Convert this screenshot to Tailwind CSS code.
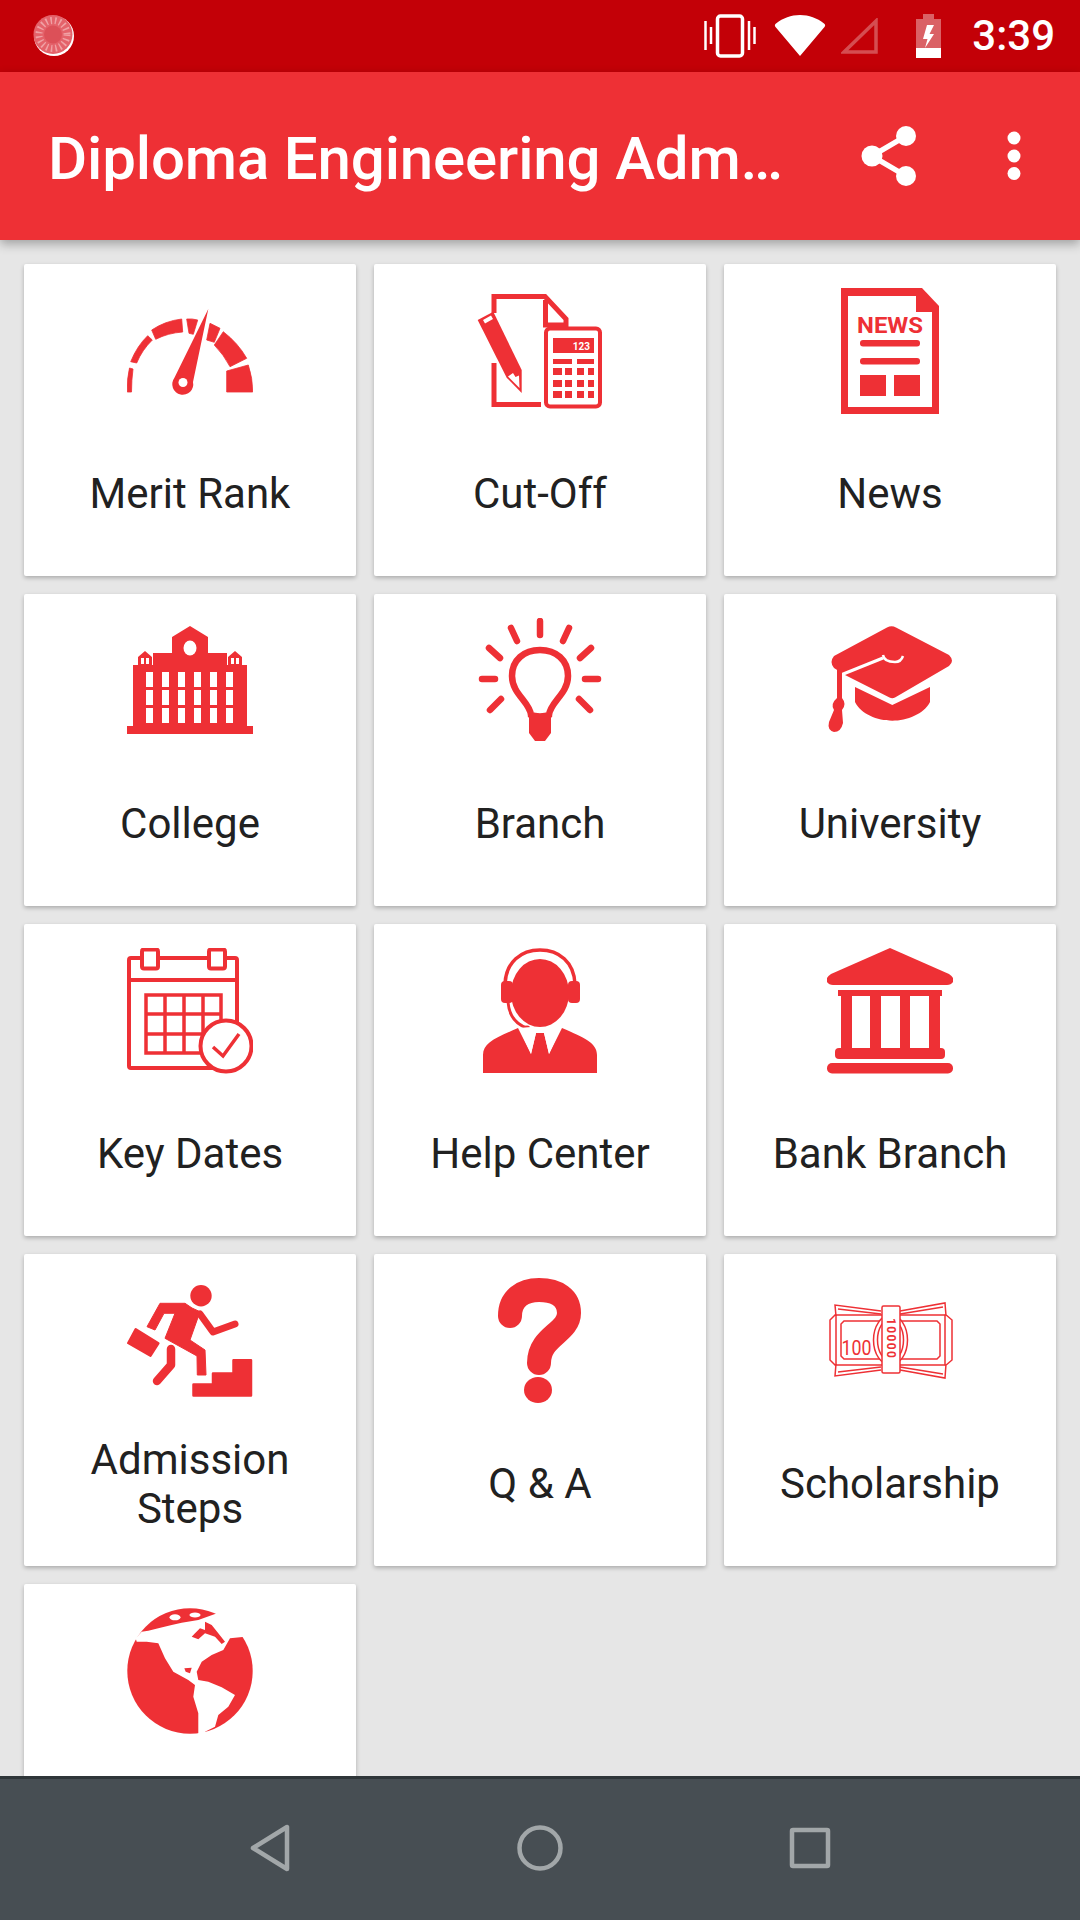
<!doctype html>
<html lang="en">
  <head>
    <meta charset="UTF-8" />
    <title>Diploma Engineering Admission</title>
    <script src="https://cdn.jsdelivr.net/npm/@tailwindcss/browser@4"></script>
  </head>
  <body class="font-['Roboto',sans-serif]">
    <div class="flex flex-col w-[1080px] h-[1920px] overflow-hidden bg-[#e6e6e6]">
      <!-- status bar -->
      <div class="h-[72px] shrink-0 bg-[#c30007] flex items-center text-white relative">
        <svg class="ml-[32px] w-[44px] h-[44px]" viewBox="0 0 44 44">
          <circle cx="22" cy="22" r="20" fill="#fff"/>
          <circle cx="21" cy="20.500" r="19.500" fill="#e4626a"/>
          <circle cx="21" cy="20.500" r="14" fill="none" stroke="#f0a0a4" stroke-width="7" stroke-dasharray="1.500 3"/>
          <circle cx="21" cy="20.500" r="9" fill="#dc5058"/>
        </svg>
        <div class="ml-auto flex items-center">
          <svg class="w-[52px] h-[44px]" viewBox="0 0 52 44" fill="none" stroke="#fff">
            <rect x="13.500" y="2" width="25" height="40" rx="3" stroke-width="3.500"/>
            <path d="M7 13V30M1.500 7V36M45 7V36M50.500 13V30" stroke-width="2.500"/>
          </svg>
          <svg class="ml-[18px] w-[52px] h-[42px]" viewBox="0 0 52 42">
            <path d="M26 41L1.500 12Q0 10 2 8.500C9 3 17 0 26 0S43 3 50 8.500Q52 10 50.500 12Z" fill="#fff"/>
          </svg>
          <svg class="ml-[15px] w-[38px] h-[36px]" viewBox="0 0 38 36" fill="none">
            <path d="M3 34L35 3V34Z" stroke="#fff" stroke-opacity=".3" stroke-width="3.500"/>
          </svg>
          <svg class="ml-[37px] w-[25px] h-[44px]" viewBox="0 0 25 44">
            <path d="M7 0H18V5H25V44H0V5H7Z" fill="#fff" fill-opacity=".38"/>
            <path d="M0 34H25V44H0Z" fill="#fff"/>
            <path d="M18 11H11L7 25H11.500L9 34L18 20H13.500Z" fill="#fff"/>
          </svg>
          <span class="ml-[31px] mr-[25px] text-[42px] font-medium leading-none">3:39</span>
        </div>
      </div>

      <!-- app bar -->
      <div class="h-[168px] shrink-0 bg-[#ee3035] flex items-center relative z-10 shadow-[0_4px_10px_rgba(0,0,0,0.3)] text-white">
        <h1 class="ml-[48px] mt-[5px] text-[60px] tracking-[-0.15px] font-medium leading-none">Diploma Engineering Adm…</h1>
        <svg class="ml-auto w-[60px] h-[64px]" viewBox="0 0 60 64" fill="#fff">
          <path d="M47 12L13 32L47 52" fill="none" stroke="#fff" stroke-width="5.500"/>
          <circle cx="47" cy="12" r="10"/>
          <circle cx="13" cy="32" r="10.500"/>
          <circle cx="47" cy="52" r="10"/>
        </svg>
        <svg class="ml-[86px] mr-[57px] w-[18px] h-[52px]" viewBox="0 0 18 52" fill="#fff">
          <circle cx="9" cy="8" r="6.500"/>
          <circle cx="9" cy="26" r="6.500"/>
          <circle cx="9" cy="43.500" r="6.500"/>
        </svg>
      </div>

      <!-- grid -->
      <main class="flex-1 min-h-0 overflow-hidden px-[24px] pt-[24px]">
        <div class="grid grid-cols-3 gap-[18px] text-[42px] leading-[49px] text-[#212121] text-center">

          <div class="h-[312px] bg-white rounded-[2px] shadow-[0_2px_4px_rgba(0,0,0,0.25)] flex flex-col items-center pt-[24px] pb-[3px]">
            <svg class="w-[126px] h-[126px] shrink-0" viewBox="0 0 126 126" fill="#ee3035">
              <g stroke="#ee3035" stroke-width="0.800" stroke-linejoin="round">
                <path d="M0.300 104Q0 90 2.500 80L6 81Q4.500 92 4.500 104Z"/>
                <path d="M3.700 73.700Q10 58 20.700 47.700L25.300 52Q15 62 9.700 75Z"/>
                <path d="M24.700 42Q38 33 54.700 31L55.700 44Q41 45 28.700 51.300Z"/>
                <path d="M59.700 31Q65 30.500 70.700 32L66.300 46.300L62 45.300Z"/>
                <path d="M83 35.300L93 40.300L87.300 54.300L79.700 52Z"/>
                <path d="M96.300 43.700Q111 55 119.700 70.300L103 78.700Q97 67 87.300 57Z"/>
                <path d="M121.300 77Q125.700 90 125.700 104H99.700V83Z"/>
              </g>
              <path d="M81.300 21L66 94A10.500 10.500 0 1 1 47.300 90Z"/>
              <circle cx="56" cy="94.500" r="4.500" fill="#fff"/>
            </svg>
            <div class="flex-1 flex items-center justify-center">Merit Rank</div>
          </div>

          <div class="h-[312px] bg-white rounded-[2px] shadow-[0_2px_4px_rgba(0,0,0,0.25)] flex flex-col items-center pt-[24px] pb-[3px]">
            <svg class="w-[126px] h-[126px] shrink-0" viewBox="0 0 126 126" fill="#ee3035">
              <path d="M17 25V8.500H68L89 31V37H68.500V12" fill="none" stroke="#ee3035" stroke-width="5"/>
              <path d="M17 75V116.500H64" fill="none" stroke="#ee3035" stroke-width="5"/>
              <path d="M0.700 32L16.300 23.700L44.700 82V105L29.700 89.700Z"/>
              <path d="M6 32L14 27.500L16 31L8 35.500ZM31 88.500L36 85L38.500 89L42 87.500L42.500 100Z" fill="#fff"/>
              <rect x="69" y="40.500" width="54" height="78" rx="4" fill="#fff" stroke="#ee3035" stroke-width="4"/>
              <rect x="76" y="50" width="41" height="15"/>
              <text x="113" y="61.500" text-anchor="end" font-size="10" font-weight="700" font-family="Roboto" fill="#fff">123</text>
              <path d="M76 71H95V76H76ZM100 71H117V76H100Z"/>
              <path d="M76 80h9v7h-9zM88 80h7v7h-7zM100 80h7v7h-7zM111 80h6v7h-6zM76 92h9v7h-9zM88 92h7v7h-7zM100 92h7v7h-7zM111 92h6v7h-6zM76 103h9v7h-9zM88 103h7v7h-7zM100 103h7v7h-7zM111 103h6v7h-6z"/>
            </svg>
            <div class="flex-1 flex items-center justify-center">Cut-Off</div>
          </div>

          <div class="h-[312px] bg-white rounded-[2px] shadow-[0_2px_4px_rgba(0,0,0,0.25)] flex flex-col items-center pt-[24px] pb-[3px]">
            <svg class="w-[126px] h-[126px] shrink-0" viewBox="0 0 126 126" fill="#ee3035">
              <path d="M14 0H95L112 18V126H14Z"/>
              <path d="M21 8H89V24H105V119H21Z" fill="#fff"/>
              <text x="63" y="45" text-anchor="middle" font-size="22" font-weight="700" font-family="Roboto" textLength="66" lengthAdjust="spacingAndGlyphs">NEWS</text>
              <rect x="33" y="52" width="60" height="6.500" rx="3"/>
              <rect x="33" y="70" width="60" height="6.500" rx="3"/>
              <rect x="33" y="87" width="26" height="21"/>
              <rect x="67" y="87" width="26" height="21"/>
            </svg>
            <div class="flex-1 flex items-center justify-center">News</div>
          </div>

          <div class="h-[312px] bg-white rounded-[2px] shadow-[0_2px_4px_rgba(0,0,0,0.25)] flex flex-col items-center pt-[24px] pb-[3px]">
            <svg class="w-[126px] h-[126px] shrink-0" viewBox="0 0 126 126" fill="#ee3035">
              <path d="M0 116V108H6V47H11V39L18 33L25 39V47H26V35H45V19L63 8L81 19V35H100V47H101V39L108 33L115 39V47H120V108H126V116Z"/>
              <ellipse cx="63" cy="30" rx="6.500" ry="7.500" fill="#fff"/>
              <path d="M19 54h7v15h-7zM35 54h7v15h-7zM51 54h7v15h-7zM67 54h7v15h-7zM83 54h7v15h-7zM99 54h7v15h-7zM19 72h7v15h-7zM35 72h7v15h-7zM51 72h7v15h-7zM67 72h7v15h-7zM83 72h7v15h-7zM99 72h7v15h-7zM19 90h7v15h-7zM35 90h7v15h-7zM51 90h7v15h-7zM67 90h7v15h-7zM83 90h7v15h-7zM99 90h7v15h-7zM14 40h3v6h-3zM19 40h3v6h-3zM104 40h3v6h-3zM109 40h3v6h-3z" fill="#fff"/>
            </svg>
            <div class="flex-1 flex items-center justify-center">College</div>
          </div>

          <div class="h-[312px] bg-white rounded-[2px] shadow-[0_2px_4px_rgba(0,0,0,0.25)] flex flex-col items-center pt-[24px] pb-[3px]">
            <svg class="w-[126px] h-[126px] shrink-0" viewBox="0 0 126 126" fill="none" stroke="#ee3035">
              <path d="M63 3V17M34 10L40 23M92 10L86 23M12 30L23 40M114 30L103 40M5 61H18M121 61H108M13 92L24 81M113 92L102 81" stroke-width="6.500" stroke-linecap="round"/>
              <path d="M54 97C53 84 35 76 35 58C35 42 47 32 63 32C79 32 91 42 91 58C91 76 73 84 72 97C68 99 58 99 54 97Z" stroke-width="6.500"/>
              <path d="M52 98H74V115L68 123H58L52 115Z" fill="#ee3035" stroke="none"/>
            </svg>
            <div class="flex-1 flex items-center justify-center">Branch</div>
          </div>

          <div class="h-[312px] bg-white rounded-[2px] shadow-[0_2px_4px_rgba(0,0,0,0.25)] flex flex-col items-center pt-[24px] pb-[3px]">
            <svg class="w-[126px] h-[126px] shrink-0" viewBox="0 0 126 126" fill="#ee3035">
              <path d="M60 9.500Q64.700 7 69 9.500L122 37Q128 43 122 48L68 79.500Q65.300 81 62.500 79.500L18 57L7 50Q2 44 7 38Z"/>
              <path d="M15 56.500L56 40" fill="none" stroke="#fff" stroke-width="3"/>
              <path d="M56 37Q57 44 68 44Q74 44 76 38" fill="none" stroke="#fff" stroke-width="2.500"/>
              <path d="M28 69L65.300 87L103 69V84C97 96 80 102.700 65.300 102.700C50 102.700 34 96 28 84Z"/>
              <path d="M10 48H15V80Q20 86 15 92L16 105Q14 114 7 114Q0 112 2 104L7 92Q3 86 10 80Z"/>
            </svg>
            <div class="flex-1 flex items-center justify-center">University</div>
          </div>

          <div class="h-[312px] bg-white rounded-[2px] shadow-[0_2px_4px_rgba(0,0,0,0.25)] flex flex-col items-center pt-[24px] pb-[3px]">
            <svg class="w-[126px] h-[126px] shrink-0" viewBox="0 0 126 126" fill="none" stroke="#ee3035" stroke-width="4">
              <rect x="2" y="10" width="108" height="110" rx="2"/>
              <path d="M2 32H110" />
              <rect x="15" y="1.500" width="16" height="19" rx="2" fill="#fff"/>
              <rect x="82" y="1.500" width="16" height="19" rx="2" fill="#fff"/>
              <path d="M19 47H94V105H19ZM38 47V105M57 47V105M76 47V105M19 66H94M19 86H94" stroke-width="3.500"/>
              <circle cx="99" cy="98" r="25.500" fill="#fff"/>
              <path d="M86 99L96 108L112 86" stroke-width="3.500"/>
            </svg>
            <div class="flex-1 flex items-center justify-center">Key Dates</div>
          </div>

          <div class="h-[312px] bg-white rounded-[2px] shadow-[0_2px_4px_rgba(0,0,0,0.25)] flex flex-col items-center pt-[24px] pb-[3px]">
            <svg class="w-[126px] h-[126px] shrink-0" viewBox="0 0 126 126" fill="#ee3035">
              <ellipse cx="63" cy="45" rx="29" ry="34"/>
              <path d="M28 36C29 14 44 2 63 2C82 2 97 14 98 36" fill="none" stroke="#ee3035" stroke-width="3.500"/>
              <rect x="24" y="33" width="12" height="22" rx="4"/>
              <rect x="91" y="33" width="12" height="22" rx="4"/>
              <path d="M31 54C32 66 38 76 50 80" fill="none" stroke="#ee3035" stroke-width="3"/>
              <circle cx="50" cy="81" r="3.500"/>
              <path d="M6 125V107C6 95 18 90 41 80L54 106L59 85H67L72 106L85 80C108 90 120 95 120 107V125Z"/>
              <path d="M42 80L54 106L59 85L63 83L54 79ZM84 80L72 106L67 85L63 83L72 79Z" fill="#fff"/>
            </svg>
            <div class="flex-1 flex items-center justify-center">Help Center</div>
          </div>

          <div class="h-[312px] bg-white rounded-[2px] shadow-[0_2px_4px_rgba(0,0,0,0.25)] flex flex-col items-center pt-[24px] pb-[3px]">
            <svg class="w-[126px] h-[126px] shrink-0" viewBox="0 0 126 126" fill="#ee3035">
              <path d="M63 0L122 26Q128 30 126 34Q124 37 120 37H6Q2 37 0 34Q-2 30 4 26Z"/>
              <rect x="11" y="42" width="104" height="6"/>
              <path d="M14 48H25V100H14ZM43 48H54V100H43ZM73 48H83V100H73ZM102 48H113V100H102Z"/>
              <rect x="8" y="100" width="110" height="11" rx="4"/>
              <rect x="0" y="115" width="126" height="10.500" rx="5"/>
            </svg>
            <div class="flex-1 flex items-center justify-center">Bank Branch</div>
          </div>

          <div class="h-[312px] bg-white rounded-[2px] shadow-[0_2px_4px_rgba(0,0,0,0.25)] flex flex-col items-center pt-[24px] pb-[3px]">
            <svg class="w-[126px] h-[126px] shrink-0" viewBox="0 0 126 126" fill="#ee3035">
              <ellipse cx="74" cy="17.700" rx="10.700" ry="10.700"/>
              <path d="M33 25.300H58L65 30L73 33.700L63 62L78 72L79 97H70.300L70 78L38 60.300L48 35.300H37L28 52L20 48.700Z" stroke="#ee3035" stroke-width="1" stroke-linejoin="round"/>
              <path d="M73 36L86 54L108 46" fill="none" stroke="#ee3035" stroke-width="7" stroke-linecap="round" stroke-linejoin="round"/>
              <path d="M44 71V87L30 103" fill="none" stroke="#ee3035" stroke-width="8.500" stroke-linecap="round" stroke-linejoin="round"/>
              <path d="M8.700 51.300L31.300 65.300L23.500 77.700L1.300 65Z" stroke="#ee3035" stroke-width="2.500" stroke-linejoin="round"/>
              <path d="M66.500 106.500H86V95.500H106.500V82.200H124V117.500H66.500Z" stroke="#ee3035" stroke-width="2.500" stroke-linejoin="round"/>
            </svg>
            <div class="flex-1 flex items-center justify-center text-center">Admission<br />Steps</div>
          </div>

          <div class="h-[312px] bg-white rounded-[2px] shadow-[0_2px_4px_rgba(0,0,0,0.25)] flex flex-col items-center pt-[24px] pb-[3px]">
            <svg class="w-[126px] h-[126px] shrink-0" viewBox="0 0 126 126" fill="#ee3035">
              <path d="M33 38C33 20 46 12 62 12C80 12 92 20 92 35C92 55 62 58 62 85" fill="none" stroke="#ee3035" stroke-width="24" stroke-linecap="round"/>
              <ellipse cx="61" cy="112" rx="14" ry="13"/>
            </svg>
            <div class="flex-1 flex items-center justify-center">Q &amp; A</div>
          </div>

          <div class="h-[312px] bg-white rounded-[2px] shadow-[0_2px_4px_rgba(0,0,0,0.25)] flex flex-col items-center pt-[24px] pb-[3px]">
            <svg class="w-[126px] h-[126px] shrink-0" viewBox="0 0 126 126" fill="none" stroke="#ee3035" stroke-width="1.500">
              <path d="M9 38L8 27L54 33M73 33L118 25L119 38M9 86L8 98L54 92M73 92L118 100L119 86M9 36L3 42V82L9 88M118 36L125 42V82L118 88M11 31L54 36M73 36L116 29M11 94L54 89M73 89L116 96"/>
              <path d="M9 37H118V87H9ZM17 43H110L113 46V78L110 81H17L14 78V46Z"/>
              <ellipse cx="63.500" cy="62" rx="17" ry="25" fill="#fff"/>
              <ellipse cx="63.500" cy="62" rx="13" ry="21"/>
              <rect x="55" y="28" width="18" height="67" rx="1.500" fill="#fff"/>
              <text x="29.500" y="77" text-anchor="middle" font-size="20" font-family="Roboto" textLength="30" lengthAdjust="spacingAndGlyphs" fill="#ee3035" stroke="none">100</text>
              <text transform="translate(59.500,40) rotate(90)" font-size="12" font-weight="700" font-family="Roboto" fill="#ee3035" stroke="none" textLength="40">10000</text>
            </svg>
            <div class="flex-1 flex items-center justify-center">Scholarship</div>
          </div>

          <div class="h-[312px] bg-white rounded-[2px] shadow-[0_2px_4px_rgba(0,0,0,0.25)] flex flex-col items-center pt-[24px] pb-[3px]">
            <svg class="w-[126px] h-[126px] shrink-0" viewBox="0 0 126 126">
              <circle cx="63" cy="63" r="62.700" fill="#ee3035"/>
              <path d="M8.700 30.300L14.700 23.700L21.300 22.700L31.300 20.300L44.700 17L54.700 14.700L71.300 12L88 6L130 -5V28.700H118L103 30.300L96.300 42L84.700 47L74.700 53.700L69.700 63.700L71.300 72L81.300 73.700L94.700 79.300L108 87L101.300 98.700L91.300 107L88 118.700L78 123.700V130H71.300V123.700V105.300L66.300 88.700L68 77L61.300 72L46.300 63.700L38 50.300L31.300 35.300L19.700 33.700L9.700 33.700Z" fill="#fff"/>
              <path d="M78 13.700L84.700 17L91.300 25.300L98 33.700L94.700 36L88 28.700L78 25.300L71.300 31.300L64.700 28.700L68 25.300L73 20.300L78 22Z" fill="#ee3035"/>
              <path d="M57.300 60.300L64.700 59.700L63 65.300L58.700 63.700Z" fill="#ee3035"/>
              <ellipse cx="48" cy="9.300" rx="5.500" ry="3" fill="#fff"/>
              <ellipse cx="68" cy="7" rx="5.500" ry="2.500" fill="#fff"/>
            </svg>
          </div>
        </div>
      </main>

      <!-- nav bar -->
      <div class="h-[144px] shrink-0 bg-[#474e53] border-t-[3px] border-[#2f3639] flex items-center relative z-10">
        <svg class="ml-[250px] mt-[-3px] w-[42px] h-[48px]" viewBox="0 0 42 48" fill="none" stroke="#a2a7a9" stroke-width="4.500" stroke-linejoin="round">
          <path d="M37 3V45L3 24Z"/>
        </svg>
        <svg class="ml-[224px] mt-[-3px] w-[48px] h-[48px]" viewBox="0 0 48 48" fill="none" stroke="#a2a7a9" stroke-width="4.500">
          <circle cx="24" cy="24" r="20.500"/>
        </svg>
        <svg class="ml-[225px] mt-[-3px] w-[42px] h-[42px]" viewBox="0 0 42 42" fill="none" stroke="#a2a7a9" stroke-width="4.500" stroke-linejoin="round">
          <rect x="3" y="3" width="36" height="36" rx="1"/>
        </svg>
      </div>
    </div>
  </body>
</html>
